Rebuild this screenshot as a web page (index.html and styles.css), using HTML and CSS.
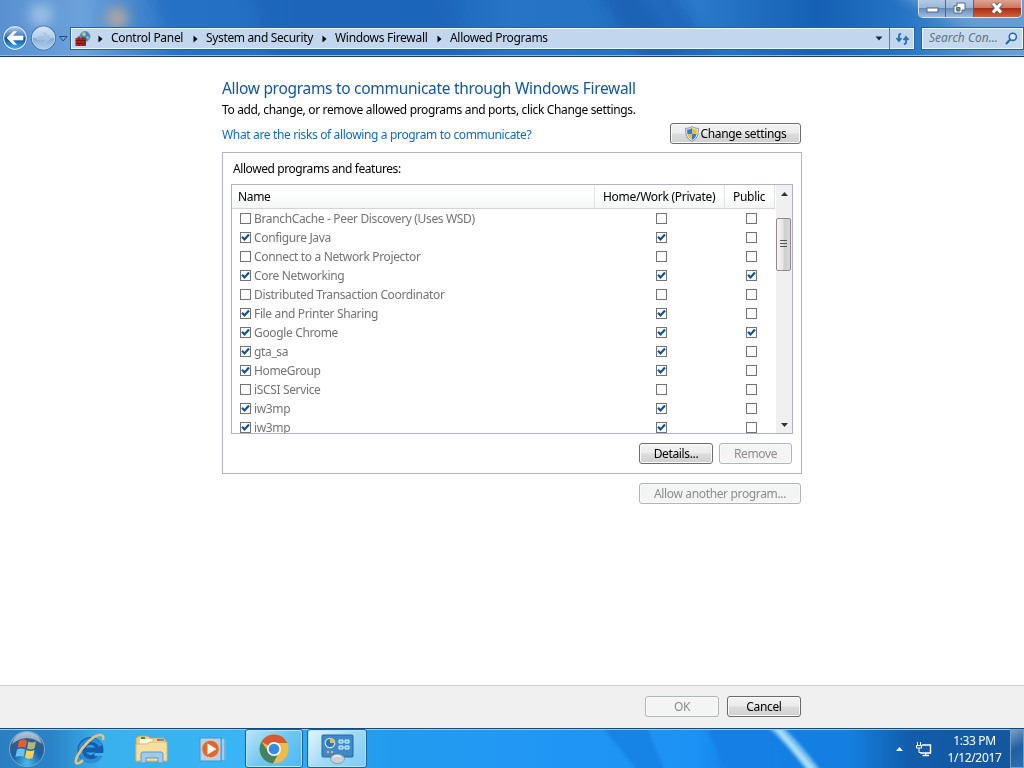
FILE: index.html
```html
<!DOCTYPE html>
<html lang="en">
<head>
    <meta charset="UTF-8">
    <title>Allowed Programs</title>
    <link rel="stylesheet" href="styles.css">
</head>
<body>
    <svg class="defs" width="0" height="0">
        <symbol id="check" viewBox="0 0 11 11">
            <path d="M2 4.8 L4.5 7.4 L9 2.6" fill="none" stroke="#12508e" stroke-width="2.2"/>
        </symbol>
        <symbol id="crumb" viewBox="0 0 5 8">
            <path d="M0.5 0.5 L4.5 4 L0.5 7.5 Z" fill="#000"/>
        </symbol>
    </svg>

    <header class="titlebar">
        <svg class="wallpaper" width="1024" height="57" viewBox="0 0 1024 57">
            <defs>
                <linearGradient id="aero">
                    <stop offset="0" stop-color="#5991d0"/>
                    <stop offset="0.08" stop-color="#6ba2db"/>
                    <stop offset="0.12" stop-color="#4f8dd0"/>
                    <stop offset="0.17" stop-color="#2b74c6"/>
                    <stop offset="0.3" stop-color="#1f69be"/>
                    <stop offset="0.42" stop-color="#1d68bd"/>
                    <stop offset="0.5" stop-color="#2774c6"/>
                    <stop offset="0.6" stop-color="#2472c4"/>
                    <stop offset="0.68" stop-color="#2b7acb"/>
                    <stop offset="0.8" stop-color="#1560b4"/>
                    <stop offset="0.88" stop-color="#2474c5"/>
                    <stop offset="1" stop-color="#72a5d7"/>
                </linearGradient>
                <filter id="soft" x="-50%" y="-50%" width="200%" height="200%"><feGaussianBlur stdDeviation="6"/></filter>
            </defs>
            <rect width="1024" height="57" fill="url(#aero)"/>
            <g filter="url(#soft)">
                <path d="M145 -20 H245 L270 77 H190 Z" fill="#2470c4" opacity="0.7"/>
                <path d="M245 -20 H440 L480 77 H280 Z" fill="#1c65b9" opacity="0.7"/>
                <path d="M590 -20 H635 L700 77 H650 Z" fill="#1a63b6"/>
                <path d="M640 -20 H665 L730 77 H700 Z" fill="#1a63b6" opacity="0.7"/>
                <circle cx="41" cy="15" r="12" fill="#98bee5"/>
                <circle cx="117" cy="18" r="11" fill="#b1a5a1"/>
                <path d="M890 -10 L1044 67 V-10 Z" fill="#659cd4"/>
            </g>
        </svg>

        <div class="window-buttons">
            <span class="win-btn">
                <svg width="13" height="6" viewBox="0 0 13 6"><rect x="1" y="1" width="11" height="4" fill="#fff" stroke="#526a82"/></svg>
            </span>
            <span class="win-btn">
                <svg width="13" height="12" viewBox="0 0 13 12"><path d="M4 1 H12 V8 H9 V11 H1 V4 H4 Z" fill="#fff" stroke="#526a82"/><path d="M3.5 5.5 H7 V9 H3.5 Z" fill="#789" stroke="#526a82"/></svg>
            </span>
            <span class="win-btn close">
                <svg width="14" height="12" viewBox="0 0 14 12"><path d="M3 1.5 L11 10.5 M11 1.5 L3 10.5" stroke="#60616d" stroke-width="5"/><path d="M3 1.5 L11 10.5 M11 1.5 L3 10.5" stroke="#fff" stroke-width="3"/></svg>
            </span>
        </div>

        <div class="navbar">
            <svg class="nav-arrows" width="68" height="28" viewBox="0 0 68 28">
                <defs>
                    <linearGradient id="backFill" x2="0" y2="1">
                        <stop offset="0" stop-color="#b0cdea"/>
                        <stop offset="0.45" stop-color="#3b76b9"/>
                        <stop offset="0.5" stop-color="#0e4a97"/>
                        <stop offset="1" stop-color="#44b5f3"/>
                    </linearGradient>
                    <linearGradient id="nextFill" x2="0" y2="1">
                        <stop offset="0" stop-color="#d4e4f5"/>
                        <stop offset="0.48" stop-color="#b4cde9"/>
                        <stop offset="0.52" stop-color="#8aacd6"/>
                        <stop offset="1" stop-color="#afd0ef"/>
                    </linearGradient>
                </defs>
                <circle cx="15" cy="14" r="12.500" fill="#3e70ab"/>
                <circle cx="15" cy="14" r="11.300" fill="url(#backFill)" stroke="#d7e7f6" stroke-width="1.200"/>
                <path d="M7 14 L13.500 7.500 H16.500 L12.500 12 H23 V16 H12.500 L16.500 20.500 H13.500 Z" fill="#fff" stroke="#fff" stroke-width="0.600"/>
                <circle cx="43.500" cy="14" r="12.500" fill="#436ca2"/>
                <circle cx="43.500" cy="14" r="11.300" fill="url(#nextFill)" stroke="#c2d8ef"/>
                <path d="M51 14 L45 8.500 H42.500 L46 12.300 H37 V15.700 H46 L42.500 19.500 H45 Z" fill="#a6c3e5"/>
                <path d="M59.500 12.500 H67 L63.200 17 Z" fill="#6e9ed2" stroke="#194d8b"/>
            </svg>
            <div class="address">
                <svg class="wall-icon" width="16" height="16" viewBox="0 0 16 16">
                    <circle cx="10" cy="5.500" r="5" fill="#4583ba" stroke="#6f94b4"/>
                    <path d="M7 2 L10 1 L11 4 L8 6 Z M11 5 L14 6 L13 9 Z" fill="#a6cfaa"/>
                    <path d="M0.500 7 H2.500 V5.500 H5 V7 H7 V5.500 H9 V7 H11 V15 H0.500 Z" fill="#a92c20"/>
                    <path d="M0.500 9.500 H11 M0.500 12.500 H11 M4 7 V9.500 M8 7 V9.500 M2.500 9.500 V12.500 M6 9.500 V12.500 M9.500 9.500 V12.500 M4 12.500 V15 M8 12.500 V15" stroke="#611712" stroke-width="0.700"/>
                </svg>
                <svg class="crumb-arrow" width="5" height="8"><use href="#crumb"/></svg>
                <span class="crumb crumb-panel">Control Panel</span>
                <svg class="crumb-arrow" width="5" height="8"><use href="#crumb"/></svg>
                <span class="crumb crumb-system">System and Security</span>
                <svg class="crumb-arrow" width="5" height="8"><use href="#crumb"/></svg>
                <span class="crumb crumb-firewall">Windows Firewall</span>
                <svg class="crumb-arrow" width="5" height="8"><use href="#crumb"/></svg>
                <span class="crumb crumb-allowed">Allowed Programs</span>
                <svg class="drop" width="8" height="5" viewBox="0 0 8 5"><path d="M0.500 0.500 H7.500 L4 4.500 Z" fill="#17293e"/></svg>
                <span class="refresh">
                    <svg width="15" height="14" viewBox="0 0 15 14"><path d="M6 1.500 L4 3 V8 M1.500 6 L4 9 L6.500 6 M9 12.500 L11 11 V6 M8.500 8 L11 5 L13.500 8" fill="none" stroke="#2875bd" stroke-width="1.900"/></svg>
                </span>
            </div>
            <div class="search">
                <span>Search Con...</span>
                <svg width="13" height="13" viewBox="0 0 13 13"><circle cx="7.800" cy="4.800" r="3.600" fill="#dceafa" stroke="#2b69af" stroke-width="1.600"/><path d="M5.200 7.500 L1 12" stroke="#2b69af" stroke-width="2.200"/></svg>
            </div>
        </div>
    </header>

    <main class="content">
        <h1>Allow programs to communicate through Windows Firewall</h1>
        <p class="intro">To add, change, or remove allowed programs and ports, click Change settings.</p>
        <div class="risk-row">
            <a class="risk-link">What are the risks of allowing a program to communicate?</a>
            <button class="btn btn-change">
                <svg width="14" height="16" viewBox="0 0 14 16">
                    <path d="M7 0.600 C9 2 11 2.300 13.400 2.300 C13.500 9 12 13 7 15.400 C2 13 0.500 9 0.600 2.300 C3 2.300 5 2 7 0.600 Z" fill="#e9eef0" stroke="#8b9298"/>
                    <path d="M7 2 C5.500 3 4 3.500 2 3.500 L2.400 8 H7 Z M7 8 H11.500 C11 11 9.500 13 7 14 Z" fill="#2982cb"/>
                    <path d="M7 2 C8.500 3 10 3.500 12 3.500 L11.600 8 H7 Z M7 8 H2.400 C3 11 4.500 13 7 14 Z" fill="#f2bd42"/>
                </svg>
                <span>Change settings</span>
            </button>
        </div>

        <section class="group">
            <p class="group-title">Allowed programs and features:</p>
            <div class="list">
                <div class="table">
                    <div class="row head">
                        <span class="name">Name</span>
                        <span class="home">Home/Work (Private)</span>
                        <span class="public">Public</span>
                    </div>
                    <div class="row"><span class="name"><i class="box"></i>BranchCache - Peer Discovery (Uses WSD)</span><span class="home"><i class="box"></i></span><span class="public"><i class="box"></i></span></div>
                    <div class="row"><span class="name"><i class="box"><svg><use href="#check"/></svg></i>Configure Java</span><span class="home"><i class="box"><svg><use href="#check"/></svg></i></span><span class="public"><i class="box"></i></span></div>
                    <div class="row"><span class="name"><i class="box"></i>Connect to a Network Projector</span><span class="home"><i class="box"></i></span><span class="public"><i class="box"></i></span></div>
                    <div class="row"><span class="name"><i class="box"><svg><use href="#check"/></svg></i>Core Networking</span><span class="home"><i class="box"><svg><use href="#check"/></svg></i></span><span class="public"><i class="box"><svg><use href="#check"/></svg></i></span></div>
                    <div class="row"><span class="name"><i class="box"></i>Distributed Transaction Coordinator</span><span class="home"><i class="box"></i></span><span class="public"><i class="box"></i></span></div>
                    <div class="row"><span class="name"><i class="box"><svg><use href="#check"/></svg></i>File and Printer Sharing</span><span class="home"><i class="box"><svg><use href="#check"/></svg></i></span><span class="public"><i class="box"></i></span></div>
                    <div class="row"><span class="name"><i class="box"><svg><use href="#check"/></svg></i>Google Chrome</span><span class="home"><i class="box"><svg><use href="#check"/></svg></i></span><span class="public"><i class="box"><svg><use href="#check"/></svg></i></span></div>
                    <div class="row"><span class="name"><i class="box"><svg><use href="#check"/></svg></i>gta_sa</span><span class="home"><i class="box"><svg><use href="#check"/></svg></i></span><span class="public"><i class="box"></i></span></div>
                    <div class="row"><span class="name"><i class="box"><svg><use href="#check"/></svg></i>HomeGroup</span><span class="home"><i class="box"><svg><use href="#check"/></svg></i></span><span class="public"><i class="box"></i></span></div>
                    <div class="row"><span class="name"><i class="box"></i>iSCSI Service</span><span class="home"><i class="box"></i></span><span class="public"><i class="box"></i></span></div>
                    <div class="row"><span class="name"><i class="box"><svg><use href="#check"/></svg></i>iw3mp</span><span class="home"><i class="box"><svg><use href="#check"/></svg></i></span><span class="public"><i class="box"></i></span></div>
                    <div class="row"><span class="name"><i class="box"><svg><use href="#check"/></svg></i>iw3mp</span><span class="home"><i class="box"><svg><use href="#check"/></svg></i></span><span class="public"><i class="box"></i></span></div>
                </div>
                <div class="scrollbar">
                    <svg width="7" height="4" viewBox="0 0 7 4"><path d="M0 4 L3.500 0 L7 4 Z" fill="#333"/></svg>
                    <div class="thumb"><i></i><i></i><i></i></div>
                    <svg width="7" height="4" viewBox="0 0 7 4"><path d="M0 0 L3.500 4 L7 0 Z" fill="#333"/></svg>
                </div>
            </div>
            <div class="group-buttons">
                <button class="btn btn-details">Details...</button>
                <button class="btn btn-remove" disabled>Remove</button>
            </div>
        </section>
        <button class="btn btn-another" disabled>Allow another program...</button>
    </main>

    <footer class="dialog-footer">
        <button class="btn btn-ok" disabled>OK</button>
        <button class="btn btn-cancel">Cancel</button>
    </footer>

    <div class="taskbar">
        <svg class="wallpaper" width="1024" height="40" viewBox="0 0 1024 40">
            <defs>
                <linearGradient id="bar">
                    <stop offset="0" stop-color="#2b7fc1"/>
                    <stop offset="0.05" stop-color="#2b83c6"/>
                    <stop offset="0.1" stop-color="#39b1ed"/>
                    <stop offset="0.24" stop-color="#38b5f5"/>
                    <stop offset="0.38" stop-color="#219bee"/>
                    <stop offset="0.5" stop-color="#2298f4"/>
                    <stop offset="0.68" stop-color="#1b92f5"/>
                    <stop offset="0.72" stop-color="#147fe6"/>
                    <stop offset="0.83" stop-color="#147fe0"/>
                    <stop offset="0.89" stop-color="#125caa"/>
                    <stop offset="1" stop-color="#15569c"/>
                </linearGradient>
                <filter id="glow"><feGaussianBlur stdDeviation="1.500"/></filter>
            </defs>
            <rect width="1024" height="40" fill="url(#bar)"/>
            <g filter="url(#glow)">
                <path d="M600 -5 H646 L666 45 H640 Z" fill="#1683e6"/>
                <path d="M706 -5 H770 V45 H726 Z" fill="#147fe5"/>
                <path d="M765 -5 H780 Q802 16 823 45 H809 Q790 18 765 -5 Z" fill="#70bff1"/>
                <path d="M771 -5 H776 L819 45 H813 Z" fill="#b2e0f6"/>
            </g>
        </svg>
        <div class="task start">
            <svg width="38" height="38" viewBox="0 0 38 38">
                <defs>
                    <radialGradient id="orb" cx="0.5" cy="0.9" r="0.85">
                        <stop offset="0" stop-color="#45bdf0"/>
                        <stop offset="0.5" stop-color="#1c62a2"/>
                        <stop offset="0.8" stop-color="#355d88"/>
                        <stop offset="1" stop-color="#9fb9d2"/>
                    </radialGradient>
                </defs>
                <circle cx="19" cy="19" r="17.500" fill="url(#orb)" stroke="#77acd6"/>
                <path d="M4 14 Q19 2 34 14 Q30 3 19 2.500 Q8 3 4 14 Z" fill="#b5c8d9" opacity="0.7"/>
                <path d="M11 11 Q15 8 19 11 L17.500 18 Q14 16 9.500 18 Z" fill="#e75d30"/>
                <path d="M20.500 11.500 Q24 13.500 28 11.500 L26.500 18.500 Q23 20.500 19 18.500 Z" fill="#b3ba78"/>
                <path d="M9 19.500 Q13 17.500 17 19.500 L15.500 27 Q12 25 7.500 27 Z" fill="#6dc1ef"/>
                <path d="M18.500 20 Q22 22 26.500 20 L25 27.500 Q21 30 17 27.500 Z" fill="#f8cf55"/>
            </svg>
        </div>
        <div class="task">
            <svg width="34" height="34" viewBox="0 0 34 34">
                <circle cx="18.500" cy="18" r="9" fill="none" stroke="#155eae" stroke-width="8"/>
                <path d="M12 18 H29" stroke="#155eae" stroke-width="5"/>
                <path d="M28.500 14 A10.500 10.500 0 0 0 8.500 18 A10.500 10.500 0 0 0 28 24" fill="none" stroke="#2b8ed8" stroke-width="4"/>
                <path d="M22.500 21 H33 V24 H22.500 Z" fill="#39b2ef"/>
                <path d="M31 8 C33 0 24 2 16 10 C7 19 1 30 5 31.500 C7 32 9 30 11 28" fill="none" stroke="#e5c576" stroke-width="2.500"/>
            </svg>
        </div>
        <div class="task folder">
            <svg width="34" height="32" viewBox="0 0 34 32">
                <path d="M1 4 L4 2 H13 L15 4 H29 L31 7 V27 H1 Z" fill="#ead28e" stroke="#c99f58"/>
                <path d="M5 5 H17 V10 H5 Z M18 7 H29 V12 H18 Z" fill="#fff7e0"/>
                <path d="M6 3 H10 V5 H6 Z" fill="#3e8f58"/><path d="M22 5 H25 V7 H22 Z" fill="#d75d37"/><path d="M25 5 H29 V7 H25 Z" fill="#4b9ad5"/>
                <path d="M1 10 H12 L15 8 H32 V27 H1 Z" fill="#f5df9e" stroke="#dcb764"/>
                <path d="M6 29 V20 Q6 18 8 18 H26 Q28 18 28 20 V29 H23 V24 H11 V29 Z" fill="#9ecbed" stroke="#5f99cb"/>
            </svg>
        </div>
        <div class="task media">
            <svg width="28" height="28" viewBox="0 0 28 28">
                <path d="M18 4 H27 V25 H18 Z" fill="#76afd8"/><path d="M21 4 V25 M24 4 V25" stroke="#d6e7f3"/>
                <rect x="1" y="3" width="21" height="23" fill="#add4ee" stroke="#4d91ca"/>
                <circle cx="11.500" cy="14" r="8.800" fill="#df682c" stroke="#eac6a8"/>
                <path d="M8.500 8.500 L17.500 14 L8.500 19.500 Z" fill="#fff"/>
            </svg>
        </div>
        <div class="task active chrome">
            <svg width="30" height="30" viewBox="0 0 30 30">
                <circle cx="15" cy="15" r="14.500" fill="#eebb48"/>
                <path d="M15 15 L2.440 7.750 A14.500 14.500 0 0 1 28.300 9 H15 Z" fill="#d65a31"/>
                <path d="M2.440 7.750 A14.500 14.500 0 0 0 14 29.500 L20.200 18 L15 15 L9.800 18 Z" fill="#438264"/>
                <circle cx="15" cy="15" r="7" fill="#f2f7fa"/>
                <circle cx="15" cy="15" r="5.300" fill="#348be0"/>
            </svg>
        </div>
        <div class="task active panel">
            <svg width="33" height="30" viewBox="0 0 33 30">
                <rect x="1" y="1" width="31" height="22" rx="1" fill="#3e8ac9" stroke="#2964a6"/>
                <circle cx="9" cy="9" r="4.700" fill="#2d73b8" stroke="#cce7fa" stroke-width="1.300"/>
                <path d="M9 9 V4 A5 5 0 0 1 14 9 Z" fill="#f0ba58"/>
                <path d="M18 6 H22 V9 H18 Z M24 6 H28 V9 H24 Z M18 12 H22 V15 H18 Z M24 12 H28 V15 H24 Z" fill="#50b6ea" stroke="#e0f2fb"/>
                <circle cx="7" cy="18" r="1.200" fill="#efb653"/><circle cx="11" cy="18" r="1.200" fill="#efb653"/>
                <ellipse cx="16.500" cy="25" rx="7" ry="4.500" fill="#ccd0d3" stroke="#8d999f"/>
                <path d="M12 23 Q16 20 20 23" fill="none" stroke="#f4f5f5" stroke-width="1.500"/>
            </svg>
        </div>
        <div class="tray">
            <svg width="7" height="4" viewBox="0 0 7 4"><path d="M0 4 L3.500 0 L7 4 Z" fill="#eef6ff"/></svg>
            <svg class="network" width="16" height="15" viewBox="0 0 16 15">
                <path d="M6 3 H14.500 V11 H5 V10 M6.500 13.500 H13 M9.700 11 V13" fill="none" stroke="#fff" stroke-width="1.400"/>
                <path d="M1.500 0 V3 M4.500 0 V3 M0.500 3.500 H5.500 V6 H0.500 Z M3 6 V10.500 H5" fill="none" stroke="#fff"/>
            </svg>
            <div class="clock"><span>1:33 PM</span><span>1/12/2017</span></div>
            <div class="show-desktop"></div>
        </div>
    </div>
</body>
</html>
```
FILE: styles.css
```css
* {
    box-sizing: border-box;
}
body {
    margin: 0;
    width: 1024px;
    height: 768px;
    overflow: hidden;
    display: flex;
    flex-direction: column;
    background: #fff;
    color: #000;
    font-family: "Noto Sans", "Open Sans", sans-serif;
    font-size: 12px;
    letter-spacing: -0.35px;
}
svg {
    display: block;
    flex: none;
}
h1, p {
    margin: 0;
    font-weight: normal;
    white-space: nowrap;
}
.defs {
    position: absolute;
}

/* Window frame */
.titlebar {
    position: relative;
    height: 57px;
    flex: none;
    border-bottom: 1px solid #123f70;
    box-shadow: inset 0 -1px #8abbe8;
}
.wallpaper {
    position: absolute;
    top: 0;
    left: 0;
    z-index: -1;
}
.window-buttons {
    display: flex;
    height: 18px;
    width: 104px;
    margin-left: 918px;
    border: 1px solid #d7e5f2;
    border-top: 0;
    border-radius: 0 0 5px 5px;
    overflow: hidden;
}
.win-btn {
    width: 28px;
    display: flex;
    justify-content: center;
    align-items: center;
    padding-bottom: 2px;
    border-right: 1px solid #49678b;
    background: linear-gradient(#b5cbe4, #9ab7d7 45%, #668ebb 50%, #9abce0);
}
.win-btn:first-child svg {
    margin-top: 5px;
}
.win-btn.close {
    width: 48px;
    border-right: 0;
    background: linear-gradient(#dda390, #cc7862 45%, #ac2d17 50%, #d55f36);
}
.navbar {
    display: flex;
    margin-top: 6px;
    height: 28px;
}
.address {
    width: 845px;
    height: 23px;
    margin: 3px 0 0 2px;
    padding-left: 4px;
    display: flex;
    align-items: center;
    border: 1px solid #286297;
    box-shadow: inset 0 0 0 1px #eff6fc;
    background: #c2d7ee;
    white-space: nowrap;
}
.crumb-arrow {
    margin: 0 8px 0 7px;
}
.crumb {
    flex: none;
    margin-top: -2px;
    letter-spacing: -0.3px;
}
.crumb-panel {
    width: 75px;
}
.crumb-system {
    width: 109px;
    letter-spacing: -0.35px;
}
.crumb-firewall {
    width: 95px;
}
.drop {
    margin-left: auto;
    margin-right: 6px;
}
.refresh {
    width: 25px;
    height: 21px;
    display: flex;
    align-items: center;
    justify-content: center;
    border-left: 1px solid #4a84aa;
}
.search {
    width: 103px;
    height: 23px;
    margin: 3px 0 0 6px;
    padding: 0 5px 0 7px;
    display: flex;
    align-items: center;
    justify-content: space-between;
    border: 1px solid #286297;
    box-shadow: inset 0 0 0 1px #eff6fc;
    background: #c5d9ee;
    color: #65727f;
    font-style: italic;
    letter-spacing: 0;
    white-space: nowrap;
}
.search span {
    margin-top: -2px;
}

/* Page content */
.content {
    width: 580px;
    height: 628px;
    flex: none;
    margin-left: 222px;
    padding-top: 20px;
    display: flex;
    flex-direction: column;
}
h1 {
    color: #12569b;
    font-size: 15.5px;
    line-height: 22px;
    letter-spacing: -0.3px;
}
.intro {
    margin-top: 2px;
    line-height: 18px;
}
.risk-row {
    display: flex;
    justify-content: space-between;
    margin: 4px 1px 0 0;
    height: 21px;
}
.risk-link {
    color: #0f6ac2;
    line-height: 24px;
    white-space: nowrap;
}
.btn {
    height: 21px;
    padding: 0;
    display: flex;
    align-items: center;
    justify-content: center;
    flex: none;
    border: 1px solid #6c6c6c;
    border-radius: 3px;
    box-shadow: inset 0 0 0 1px #fafafa;
    background: linear-gradient(#f3f3f3, #ebebeb 48%, #dcdcdc 52%, #d0d0d0);
    color: #000;
    font-family: inherit;
    font-size: 12px;
    letter-spacing: inherit;
    white-space: nowrap;
}
.btn:disabled {
    border-color: #b1b5b6;
    background: #f4f4f4;
    color: #8c8c8c;
}
.btn-change {
    width: 131px;
    gap: 2px;
}
.group {
    height: 322px;
    margin-top: 8px;
    padding: 7px 8px 0;
    border: 1px solid #b2b0d0;
}
.group-title {
    padding-left: 2px;
    line-height: 18px;
    letter-spacing: -0.42px;
}
.list {
    display: flex;
    width: 562px;
    height: 250px;
    margin-top: 6px;
    border: 1px solid #b2b0d0;
    overflow: hidden;
}
.table {
    width: 544px;
}
.row {
    display: flex;
    height: 19px;
    color: #737373;
}
.row > span {
    display: flex;
    align-items: center;
    white-space: nowrap;
}
.row .name {
    width: 363px;
    padding-left: 8px;
    gap: 3px;
}
.row .home {
    width: 130px;
    padding-left: 61px;
}
.row .public {
    width: 50px;
    padding-left: 21px;
}
.row.head {
    height: 24px;
    color: #000;
    background: linear-gradient(#fff 40%, #f4f5f6);
    border-bottom: 1px solid #d5d5d5;
    margin-right: 1px;
}
.head > span {
    border-right: 1px solid #e2e3e6;
}
.row.head .name {
    padding-left: 6px;
}
.row.head .home,
.row.head .public {
    padding-left: 8px;
    letter-spacing: -0.28px;
}
.box {
    width: 11px;
    height: 11px;
    border: 1px solid #737373;
    background: #fff;
    flex: none;
}
.box svg {
    width: 11px;
    height: 11px;
    margin: -1px;
}
.scrollbar {
    width: 16px;
    display: flex;
    flex-direction: column;
    align-items: center;
    padding: 7px 0 6px;
    background: #f0f0f0;
}
.scrollbar > svg:last-child {
    margin-top: auto;
}
.thumb {
    width: 15px;
    height: 53px;
    margin: 22px 1px 0 0;
    display: flex;
    flex-direction: column;
    align-items: center;
    justify-content: center;
    gap: 2px;
    padding: 0 1px 2px 0;
    border: 1px solid #95878a;
    border-radius: 2px;
    background: linear-gradient(90deg, #f4f4f4, #e6e6e6 45%, #cfcfd2 55%, #d8d8da);
}
.thumb i {
    width: 7px;
    height: 1px;
    background: #555;
}
.group-buttons {
    display: flex;
    gap: 6px;
    margin: 9px 0 0 408px;
}
.btn-details {
    width: 74px;
}
.btn-remove {
    width: 73px;
}
.btn-another {
    width: 162px;
    margin: 9px 0 0 417px;
}
.dialog-footer {
    height: 43px;
    flex: none;
    padding: 10px 223px 0 0;
    display: flex;
    justify-content: flex-end;
    gap: 8px;
    border-top: 1px solid #cfcfcf;
    background: #f0f0f0;
}
.btn-ok,
.btn-cancel {
    width: 74px;
}

/* Taskbar */
.taskbar {
    position: relative;
    height: 40px;
    flex: none;
    display: flex;
    border-top: 1px solid #124a80;
    box-shadow: inset 0 1px #91cdf5;
}
.task {
    width: 61px;
    display: flex;
    align-items: center;
    justify-content: center;
    flex: none;
}
.task.start {
    width: 58px;
    padding-right: 4px;
}
.task.folder {
    width: 62px;
    padding: 2px 0 0 3px;
}
.task.media {
    width: 64px;
    padding-right: 1px;
}
.task.active {
    width: 58px;
    height: 39px;
    border: 1px solid #185f9b;
    border-radius: 3px;
    box-shadow: inset 0 0 0 1px #b8e5fb;
    background: linear-gradient(135deg, #bce5f9, #71c7f3 50%, #4bb7f1);
}
.task.panel {
    width: 60px;
    margin-left: 4px;
    background: linear-gradient(135deg, #e4f5fc, #a1daf6 50%, #7ccaf3);
}
.tray {
    margin-left: auto;
    display: flex;
    align-items: center;
    color: #fff;
}
.network {
    margin: 1px 16px 0 13px;
}
.clock {
    width: 53px;
    margin-right: 9px;
    display: flex;
    flex-direction: column;
    align-items: center;
    line-height: 17px;
}
.show-desktop {
    width: 14px;
    height: 39px;
    border: 1px solid #6f9fcf;
    background: linear-gradient(150deg, #7a9fc5, #205f9f 50%, #2b70b3);
}
```
